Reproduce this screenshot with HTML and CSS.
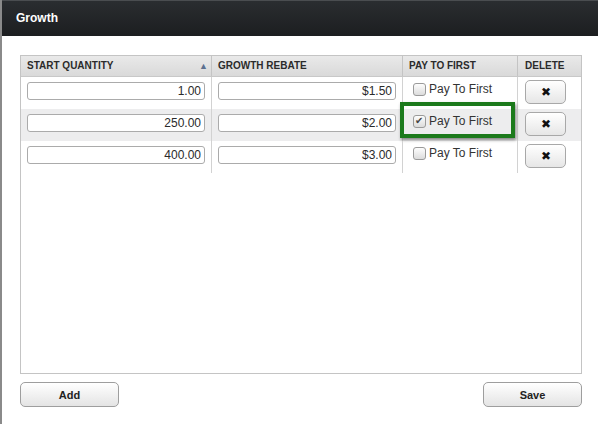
FILE: index.html
```html
<!DOCTYPE html>
<html>
<head>
<meta charset="utf-8">
<link rel="stylesheet" href="styles.css">
</head>
<body>
<div class="modal">
  <div class="titlebar">Growth</div>
  <div class="content">
    <div class="grid">
      <div class="row head">
        <div class="cell c1">START QUANTITY<span class="sort">&#9650;</span></div>
        <div class="cell c2">GROWTH REBATE</div>
        <div class="cell c3">PAY TO FIRST</div>
        <div class="cell c4">DELETE</div>
      </div>
      <div class="row">
        <div class="cell c1"><input class="num" type="text" value="1.00"></div>
        <div class="cell c2"><input class="num" type="text" value="$1.50"></div>
        <div class="cell c3"><label class="chk"><input type="checkbox"> Pay To First</label></div>
        <div class="cell c4"><button class="del">&#10006;</button></div>
      </div>
      <div class="row alt">
        <div class="cell c1"><input class="num" type="text" value="250.00"></div>
        <div class="cell c2"><input class="num" type="text" value="$2.00"></div>
        <div class="cell c3 hl"><label class="chk"><input type="checkbox" checked> Pay To First</label><span class="highlight"></span></div>
        <div class="cell c4"><button class="del">&#10006;</button></div>
      </div>
      <div class="row">
        <div class="cell c1"><input class="num" type="text" value="400.00"></div>
        <div class="cell c2"><input class="num" type="text" value="$3.00"></div>
        <div class="cell c3"><label class="chk"><input type="checkbox"> Pay To First</label></div>
        <div class="cell c4"><button class="del">&#10006;</button></div>
      </div>
    </div>
    <div class="actions">
      <button class="btn">Add</button>
      <button class="btn">Save</button>
    </div>
  </div>
</div>
</body>
</html>
```

FILE: styles.css
```css
html, body {
  margin: 0;
  padding: 0;
  background: #fff;
  font-family: "Liberation Sans", Arial, sans-serif;
}
.modal {
  width: 598px;
  height: 424px;
  box-sizing: border-box;
  border-left: 2px solid #8a8a8a;
  background: #fff;
  overflow: hidden;
}
.titlebar {
  height: 36px;
  box-sizing: border-box;
  border-top: 1px solid #4a4d50;
  background: linear-gradient(#2a2d30, #1c1e20);
  color: #fff;
  font-weight: bold;
  font-size: 12px;
  line-height: 34px;
  padding-left: 14px;
}
.content {
  padding: 19px 16px 0 18px;
}
.grid {
  border: 1px solid #c4c4c4;
  height: 319px;
  box-sizing: border-box;
}
.row {
  display: grid;
  grid-template-columns: 191px 191px 115px 1fr;
  height: 32px;
  box-sizing: border-box;
}
.row.head {
  height: 21px;
  background: linear-gradient(#e9e9e9, #d9d9d9);
  border-bottom: 1px solid #c8c8c8;
}
.row.alt {
  background: #ededee;
}
.cell {
  border-right: 1px solid #d2d2d2;
  box-sizing: border-box;
  position: relative;
}
.cell.c4 {
  border-right: none;
}
.head .cell {
  font-size: 10px;
  font-weight: bold;
  color: #2b2b2b;
  line-height: 20px;
  padding-left: 6px;
  border-right-color: #c4c4c4;
}
.head .c4 {
  padding-left: 7px;
}
.sort {
  position: absolute;
  right: 3px;
  top: 0;
  font-size: 9px;
  color: #5c7090;
}
.num {
  display: block;
  box-sizing: border-box;
  width: 178px;
  height: 18px;
  margin: 5px 0 0 6px;
  border: 1px solid #ababab;
  border-radius: 3px;
  font-family: "Liberation Sans", Arial, sans-serif;
  font-size: 12px;
  color: #2a2a2a;
  text-align: right;
  padding: 0 3px 0 0;
  background: #fff;
  outline: none;
}
.chk {
  display: flex;
  align-items: center;
  font-size: 12px;
  color: #333;
  padding: 5px 0 0 10px;
  gap: 3px;
}
.chk input {
  appearance: none;
  -webkit-appearance: none;
  margin: 0;
  width: 13px;
  height: 13px;
  box-sizing: border-box;
  border: 1px solid #9a9a9a;
  border-radius: 3px;
  background: linear-gradient(#fdfdfd, #dcdcdc);
  position: relative;
}
.chk input:checked::after {
  content: "\2714";
  position: absolute;
  left: 1px;
  top: -1px;
  font-size: 10px;
  line-height: 12px;
  color: #444;
}
.highlight {
  position: absolute;
  left: -3px;
  top: -7px;
  width: 115px;
  height: 36px;
  box-sizing: border-box;
  border: 4px solid #1c7a1c;
  box-shadow: 1px 2px 3px rgba(0,0,0,0.45);
}
.del {
  display: block;
  width: 41px;
  height: 24px;
  margin: 3px 0 0 7px;
  border: 1px solid #a8a8a8;
  border-radius: 5px;
  background: linear-gradient(#ffffff, #e6e6e6);
  font-size: 12px;
  color: #111;
  padding: 0;
  line-height: 22px;
}
.actions {
  display: flex;
  justify-content: space-between;
  margin-top: 8px;
}
.btn {
  width: 99px;
  height: 25px;
  border: 1px solid #9e9e9e;
  border-radius: 5px;
  background: linear-gradient(#ffffff, #e4e4e4);
  font-family: "Liberation Sans", Arial, sans-serif;
  font-size: 11px;
  font-weight: bold;
  color: #222;
  padding: 0;
}
```
